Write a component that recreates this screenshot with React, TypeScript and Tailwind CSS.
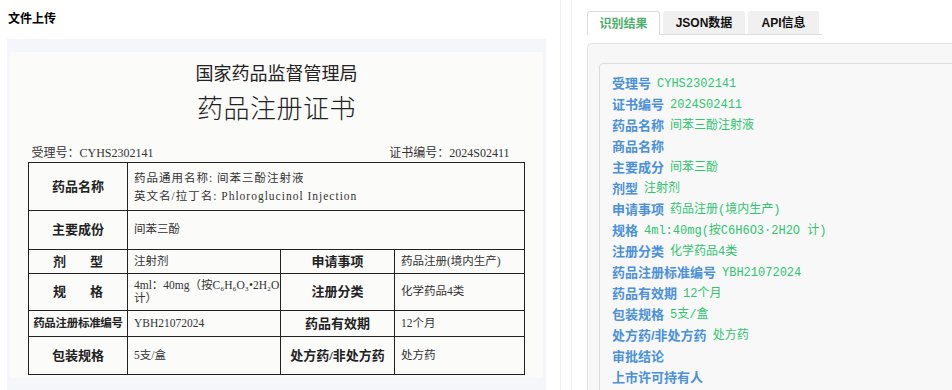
const fields: [string, string][] = [
  ['受理号', 'CYHS2302141'],
  ['证书编号', '2024S02411'],
  ['药品名称', '间苯三酚注射液'],
  ['商品名称', ''],
  ['主要成分', '间苯三酚'],
  ['剂型', '注射剂'],
  ['申请事项', '药品注册(境内生产)'],
  ['规格', '4ml:40mg(按C6H6O3·2H2O 计)'],
  ['注册分类', '化学药品4类'],
  ['药品注册标准编号', 'YBH21072024'],
  ['药品有效期', '12个月'],
  ['包装规格', '5支/盒'],
  ['处方药/非处方药', '处方药'],
  ['审批结论', ''],
  ['上市许可持有人', ''],
]

const cell = 'border border-[#222] p-0 align-middle'
const labelBase = `${cell} whitespace-nowrap text-center font-bold text-[#222]`
const labelCell = `${labelBase} text-[13px]`
const valueCell = `${cell} pl-[6px] text-[11.5px] text-[#333]`

function Spread({ a, b }: { a: string; b: string }) {
  return (
    <div className="mx-auto flex w-[50px] justify-between">
      <span>{a}</span>
      <span>{b}</span>
    </div>
  )
}

function Certificate() {
  return (
    <div className="flex h-[326px] flex-col items-center bg-[#fbfbfa] font-['Liberation_Serif','Noto_Sans_CJK_SC',serif]">
      <div className="mt-[11px] font-['Noto_Sans_CJK_SC',sans-serif] text-[18px] leading-[18px] text-[#222]">
        国家药品监督管理局
      </div>
      <div className="mt-[16px] text-[26px] font-light leading-[26px] tracking-[0.5px] text-[#222]">
        药品注册证书
      </div>

      <div className="mt-[23px] flex w-[496px] justify-between pl-[3px] pr-[15px] text-[12px] leading-[14px] text-[#333]">
        <span>受理号：CYHS2302141</span>
        <span>证书编号：2024S02411</span>
      </div>

      <table className="mt-[2px] w-[496px] table-fixed border-collapse">
        <colgroup>
          <col className="w-[99px]" />
          <col className="w-[153px]" />
          <col className="w-[114px]" />
          <col className="w-[130px]" />
        </colgroup>
        <tbody>
          <tr className="h-[48px]">
            <td className={labelCell}>药品名称</td>
            <td className={`${valueCell} tracking-[1px]`} colSpan={3}>
              <div className="leading-[18px]">药品通用名称: 间苯三酚注射液</div>
              <div className="leading-[18px]">英文名/拉丁名: Phloroglucinol Injection</div>
            </td>
          </tr>
          <tr className="h-[39px]">
            <td className={labelCell}>主要成份</td>
            <td className={valueCell} colSpan={3}>
              间苯三酚
            </td>
          </tr>
          <tr className="h-[24px]">
            <td className={labelCell}>
              <Spread a="剂" b="型" />
            </td>
            <td className={valueCell}>注射剂</td>
            <td className={labelCell}>申请事项</td>
            <td className={valueCell}>药品注册(境内生产)</td>
          </tr>
          <tr className="h-[37px]">
            <td className={labelCell}>
              <Spread a="规" b="格" />
            </td>
            <td className={`${valueCell} leading-[13px]`}>4ml：40mg（按C₆H₆O₃•2H₂O 计）</td>
            <td className={labelCell}>注册分类</td>
            <td className={valueCell}>化学药品4类</td>
          </tr>
          <tr className="h-[26px]">
            <td className={`${labelBase} text-[11.5px] tracking-[-0.3px]`}>药品注册标准编号</td>
            <td className={valueCell}>YBH21072024</td>
            <td className={labelCell}>药品有效期</td>
            <td className={valueCell}>12个月</td>
          </tr>
          <tr className="h-[38px]">
            <td className={labelCell}>包装规格</td>
            <td className={valueCell}>5支/盒</td>
            <td className={labelCell}>处方药/非处方药</td>
            <td className={valueCell}>处方药</td>
          </tr>
        </tbody>
      </table>
    </div>
  )
}

export default function App() {
  return (
    <div className="flex h-[390px] w-[952px] overflow-hidden bg-white font-['Liberation_Sans','Noto_Sans_CJK_SC',sans-serif]">
      {/* upload column */}
      <div className="w-[561px] shrink-0 border-r border-[#eef0f3] pl-[7px] pt-[11px]">
        <div className="pl-[1px] text-[12px] font-bold leading-[16px] text-black">文件上传</div>
        <div className="mt-[12px] h-[360px] w-[539px] bg-[#f4f6f9] pl-[3px] pr-[3px] pt-[13px]">
          <Certificate />
        </div>
      </div>

      {/* result column */}
      <div className="ml-[10px] min-w-0 flex-1 border-l border-[#eef0f3] pl-[15px] pt-[11px]">
        <div className="flex w-fit gap-[3px] border-b border-[#dddddd] pr-[3px] text-[12px] font-bold">
          <div className="-mb-px flex h-[24px] w-[73px] items-center justify-center rounded-t-[3px] border border-b-0 border-[#dddddd] bg-white text-[#4cae6a]">
            识别结果
          </div>
          <div className="flex h-[23px] w-[82px] items-center justify-center rounded-t-[3px] bg-[#f0f0f0] text-[#111]">
            JSON数据
          </div>
          <div className="flex h-[23px] w-[71px] items-center justify-center rounded-t-[3px] bg-[#f0f0f0] text-[#111]">
            API信息
          </div>
        </div>

        <div className="mt-[8px] h-[400px] w-[400px] rounded-[4px] border border-[#e3e3e3] bg-[#f7f7f7] pl-[11px] pt-[19px]">
          <div className="h-[400px] rounded-[4px] border border-[#dcdcdc] bg-[#f8f8f8] pl-[12px] pt-[9px]">
            {fields.map(([label, value]) => (
              <div key={label} className="flex h-[21px] items-center whitespace-nowrap">
                <span className="text-[13px] font-bold text-[#4a90dc]">{label}</span>
                {value && (
                  <span className="ml-[6px] font-['Liberation_Mono','Noto_Sans_CJK_SC',monospace] text-[12px] text-[#2ec56f]">
                    {value}
                  </span>
                )}
              </div>
            ))}
          </div>
        </div>
      </div>
    </div>
  )
}
